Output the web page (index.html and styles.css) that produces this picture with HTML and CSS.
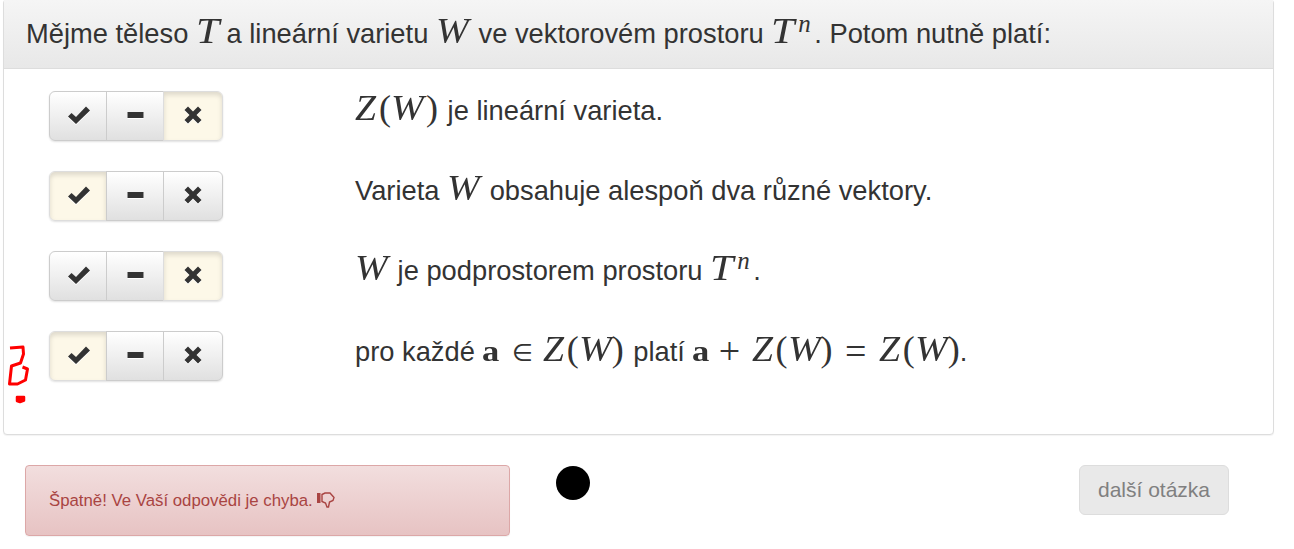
FILE: index.html
```html
<!DOCTYPE html>
<html lang="cs">

<head>
    <meta charset="UTF-8">
    <title>Test</title>
    <link rel="stylesheet" href="styles.css">
</head>

<body>
    <svg class="icon-defs" width="0" height="0">
        <symbol id="i-ok" viewBox="0 0 22 18">
            <path d="M0 10.500L3.500 7l4.500 4L18 .5l4 4L8 18z" />
        </symbol>
        <symbol id="i-minus" viewBox="0 0 16 6">
            <path d="M0 0h16v6H0z" />
        </symbol>
        <symbol id="i-remove" viewBox="0 0 18 18">
            <path d="M4 .5L9 5.500 14 .5 17.500 4 12.500 9l5 5-3.500 3.500-5-5-5 5L.5 14l5-5-5-5z" />
        </symbol>
    </svg>

    <div class="panel">
        <div class="panel-heading">Mějme těleso <i class="m t">T</i> a lineární varietu <i class="m w">W</i> ve vektorovém prostoru <i class="m t">T</i><sup class="m-sup">n</sup>. Potom nutně platí:</div>
        <div class="panel-body">
            <div class="row">
                <div class="btn-group">
                    <button class="btn"><svg class="ico-ok"><use href="#i-ok"></use></svg></button>
                    <button class="btn"><svg class="ico-minus"><use href="#i-minus"></use></svg></button>
                    <button class="btn active"><svg class="ico-remove"><use href="#i-remove"></use></svg></button>
                </div>
                <div class="answer"><i class="m z">Z</i><span class="paren">(</span><i class="m w">W</i><span class="paren close">)</span> je lineární varieta.</div>
            </div>
            <div class="row">
                <div class="btn-group">
                    <button class="btn active"><svg class="ico-ok"><use href="#i-ok"></use></svg></button>
                    <button class="btn"><svg class="ico-minus"><use href="#i-minus"></use></svg></button>
                    <button class="btn"><svg class="ico-remove"><use href="#i-remove"></use></svg></button>
                </div>
                <div class="answer">Varieta <i class="m w">W</i> obsahuje alespoň dva různé vektory.</div>
            </div>
            <div class="row">
                <div class="btn-group">
                    <button class="btn"><svg class="ico-ok"><use href="#i-ok"></use></svg></button>
                    <button class="btn"><svg class="ico-minus"><use href="#i-minus"></use></svg></button>
                    <button class="btn active"><svg class="ico-remove"><use href="#i-remove"></use></svg></button>
                </div>
                <div class="answer"><i class="m w">W</i> je podprostorem prostoru <i class="m t">T</i><sup class="m-sup">n</sup>.</div>
            </div>
            <div class="row">
                <div class="btn-group">
                    <button class="btn active"><svg class="ico-ok"><use href="#i-ok"></use></svg></button>
                    <button class="btn"><svg class="ico-minus"><use href="#i-minus"></use></svg></button>
                    <button class="btn"><svg class="ico-remove"><use href="#i-remove"></use></svg></button>
                </div>
                <div class="answer long">pro každé <b class="m-bold">a</b> <span class="m-op in">∈</span> <i class="m z">Z</i><span class="paren">(</span><i class="m w">W</i><span class="paren close">)</span> platí <b class="m-bold">a</b> <span class="m-op">+</span> <i class="m z">Z</i><span class="paren">(</span><i class="m w">W</i><span class="paren close">)</span> <span class="m-op eq">=</span> <i class="m z">Z</i><span class="paren">(</span><i class="m w">W</i><span class="paren">)</span>.</div>
            </div>
        </div>
    </div>

    <div class="footer">
        <div class="alert">Špatně! Ve Vaší odpovědi je chyba.
            <svg class="thumb" viewBox="0 0 18 16">
                <path class="thumb-bar" d="M0 1h3.500v10H0z" />
                <path class="thumb-hand" d="M5 2.500L8 1h5l4 4.500-1 3-3.500 1.500-1 5H10L8.500 11 5 9.500z" />
            </svg>
        </div>
        <div class="dot"></div>
        <button class="next" disabled>další otázka</button>
    </div>

    <svg class="scribble" width="34" height="64" viewBox="0 0 34 64">
        <path d="M4 3l13-1 .5 7-3 9-9 3-2 18 8 0 8-4 2-11-5-2" />
        <path class="scribble-dot" d="M11 52h7v3.500l-4 1.500-3-1z" />
    </svg>
</body>

</html>
```

FILE: styles.css
```css
* {
    box-sizing: border-box;
}

body {
    margin: 0;
    height: 549px;
    overflow: hidden;
    background: #fff;
    color: #333;
    font-family: "Liberation Sans", Arial, sans-serif;
    font-size: 27.300px;
    position: relative;
}

.icon-defs {
    position: absolute;
}

.panel {
    margin: -1px 20px 0 3px;
    height: 436px;
    border: 1px solid #ddd;
    border-radius: 4px;
    background: #fff;
    box-shadow: 0 1px 1px rgba(0, 0, 0, .05);
}

.panel-heading {
    height: 69px;
    padding: 18px 22px 0;
    line-height: 32px;
    border-bottom: 1px solid #ddd;
    background: linear-gradient(to bottom, #f5f5f5 0, #e8e8e8 100%);
    white-space: nowrap;
}

.panel-body {
    padding: 22px 0 0 45px;
}

.row {
    display: flex;
    height: 50px;
    margin-bottom: 30px;
}

.btn-group {
    display: flex;
    width: 174px;
    height: 50px;
    flex: none;
    border-radius: 6px;
    box-shadow: 0 1px 2px rgba(0, 0, 0, .12);
}

.btn {
    flex: 0 0 58px;
    padding: 0 0 2px;
    margin: 0 0 0 -1px;
    border: 1px solid #ccc;
    background: linear-gradient(to bottom, #fff 0, #e0e0e0 100%);
    color: #333;
    display: flex;
    align-items: center;
    justify-content: center;
}

.btn:first-child {
    margin-left: 0;
    padding-left: 2px;
    border-radius: 6px 0 0 6px;
}

.btn:last-child {
    flex: 1;
    border-radius: 0 6px 6px 0;
}

.btn.active {
    background: #fdf8e8;
    border-color: #ddd;
    box-shadow: inset 0 3px 5px rgba(0, 0, 0, .125);
}

.btn svg {
    fill: #333;
    filter: drop-shadow(0 1px 0 #fff);
}

.ico-ok {
    width: 22px;
    height: 18px;
}

.ico-minus {
    width: 17px;
    height: 6px;
}

.ico-remove {
    width: 18px;
    height: 18px;
}

.answer {
    margin-left: 132px;
    padding-top: 2px;
    line-height: 36px;
    white-space: nowrap;
}

.answer.long {
    padding-top: 3px;
}

.m {
    display: inline-block;
    font-family: "Liberation Serif", serif;
    font-size: 35px;
    line-height: 0;
    transform-origin: left center;
}

.t {
    width: 23px;
    transform: scaleX(1.2);
}

.w {
    width: 35px;
    transform: scaleX(1.12);
}

.long .w {
    width: 33px;
}

.z {
    width: 24px;
    transform: scaleX(1.08);
}

.m-sup {
    display: inline-block;
    width: 14px;
    margin: 0 2px 0 4px;
    font-family: "Liberation Serif", serif;
    font-style: italic;
    font-size: 25px;
    line-height: 0;
    vertical-align: 11px;
}

.paren {
    font-family: "Liberation Serif", serif;
    font-size: 36px;
    line-height: 0;
}

.paren.close {
    margin-right: 2px;
}

.m-bold {
    display: inline-block;
    width: 18px;
    font-family: "Liberation Serif", serif;
    font-size: 30px;
    line-height: 0;
    transform: scaleX(1.15);
    transform-origin: left center;
}

.m-op {
    display: inline-block;
    width: 23px;
    margin: 0 3px 0 0;
    text-align: center;
    font-family: "Liberation Serif", serif;
    font-size: 38px;
    line-height: 0;
    vertical-align: -3px;
}

.m-op.eq {
    margin: 0 4px 0 2px;
}

.m-op.in {
    margin: 0 1px 0 3px;
    font-family: "DejaVu Sans", sans-serif;
    font-size: 24px;
    vertical-align: 0;
}

.footer {
    display: flex;
    align-items: flex-start;
    margin-top: 30px;
    padding: 0 65px 0 25px;
}

.alert {
    width: 485px;
    height: 71px;
    padding: 26px 23px 0;
    font-size: 16.800px;
    line-height: 18px;
    color: #a94442;
    border: 1px solid #dca7a7;
    border-radius: 4px;
    background: linear-gradient(to bottom, #f2dede 0, #e7c3c3 100%);
    box-shadow: 0 1px 1px rgba(0, 0, 0, .05);
}

.thumb {
    width: 18px;
    height: 16px;
    vertical-align: -2px;
}

.thumb-bar {
    fill: #a94442;
}

.thumb-hand {
    fill: none;
    stroke: #a94442;
    stroke-width: 1.400px;
}

.dot {
    width: 34px;
    height: 34px;
    margin: 1px 0 0 46px;
    border-radius: 50%;
    background: #000;
}

.next {
    margin-left: auto;
    width: 150px;
    height: 50px;
    padding: 0;
    font-family: inherit;
    font-size: 21px;
    color: #808080;
    border: 1px solid #ddd;
    border-radius: 6px;
    background: #e9e9e9;
}

.scribble {
    position: absolute;
    left: 6px;
    top: 345px;
    fill: none;
    stroke: #f00;
    stroke-width: 3px;
    stroke-linejoin: round;
}

.scribble-dot {
    stroke-width: 2.500px;
    fill: #f00;
}
```
